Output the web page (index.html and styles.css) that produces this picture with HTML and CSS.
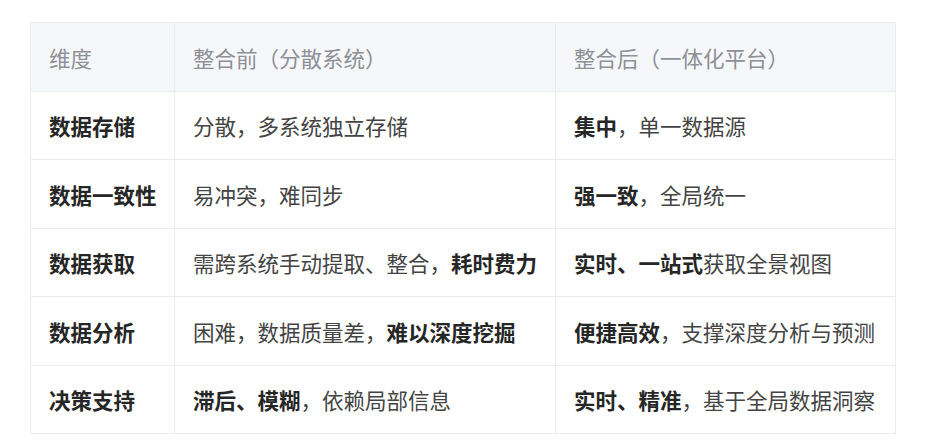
FILE: index.html
```html
<!DOCTYPE html>
<html lang="zh-CN">
<head>
<meta charset="utf-8">
<link rel="stylesheet" href="styles.css">
</head>
<body>
<div class="wrap">
<table class="cmp">
  <colgroup>
    <col class="c1"><col class="c2"><col class="c3">
  </colgroup>
  <thead>
    <tr><th>维度</th><th>整合前（分散系统）</th><th>整合后（一体化平台）</th></tr>
  </thead>
  <tbody>
    <tr><td class="dim">数据存储</td><td>分散，多系统独立存储</td><td><b>集中</b>，单一数据源</td></tr>
    <tr><td class="dim">数据一致性</td><td>易冲突，难同步</td><td><b>强一致</b>，全局统一</td></tr>
    <tr><td class="dim">数据获取</td><td>需跨系统手动提取、整合，<b>耗时费力</b></td><td><b>实时、一站式</b>获取全景视图</td></tr>
    <tr><td class="dim">数据分析</td><td>困难，数据质量差，<b>难以深度挖掘</b></td><td><b>便捷高效</b>，支撑深度分析与预测</td></tr>
    <tr><td class="dim">决策支持</td><td><b>滞后、模糊</b>，依赖局部信息</td><td><b>实时、精准</b>，基于全局数据洞察</td></tr>
  </tbody>
</table>
</div>
</body>
</html>
```

FILE: styles.css
```css
html, body {
  margin: 0;
  padding: 0;
  background: #ffffff;
}
body {
  font-family: "Noto Sans CJK SC", "Noto Sans", sans-serif;
  color: #3a3a3a;
}
.wrap {
  padding: 22px 0 0 30px;
}
.cmp {
  border-collapse: collapse;
  table-layout: fixed;
  width: 865px;
  font-size: 21.5px;
}
.c1 { width: 144px; }
.c2 { width: 381px; }
.c3 { width: 340px; }
.cmp th, .cmp td {
  border: 1px solid #eaecf0;
  padding: 1.5px 0 0 18px;
  height: 66px;
  text-align: left;
  vertical-align: middle;
  line-height: 28px;
  white-space: nowrap;
}
.cmp th {
  background: #f6f7fa;
  color: #8d9096;
  font-weight: 400;
}
.cmp td {
  color: #444;
}
.cmp td.dim, .cmp b {
  font-weight: 700;
  color: #262626;
}
```
